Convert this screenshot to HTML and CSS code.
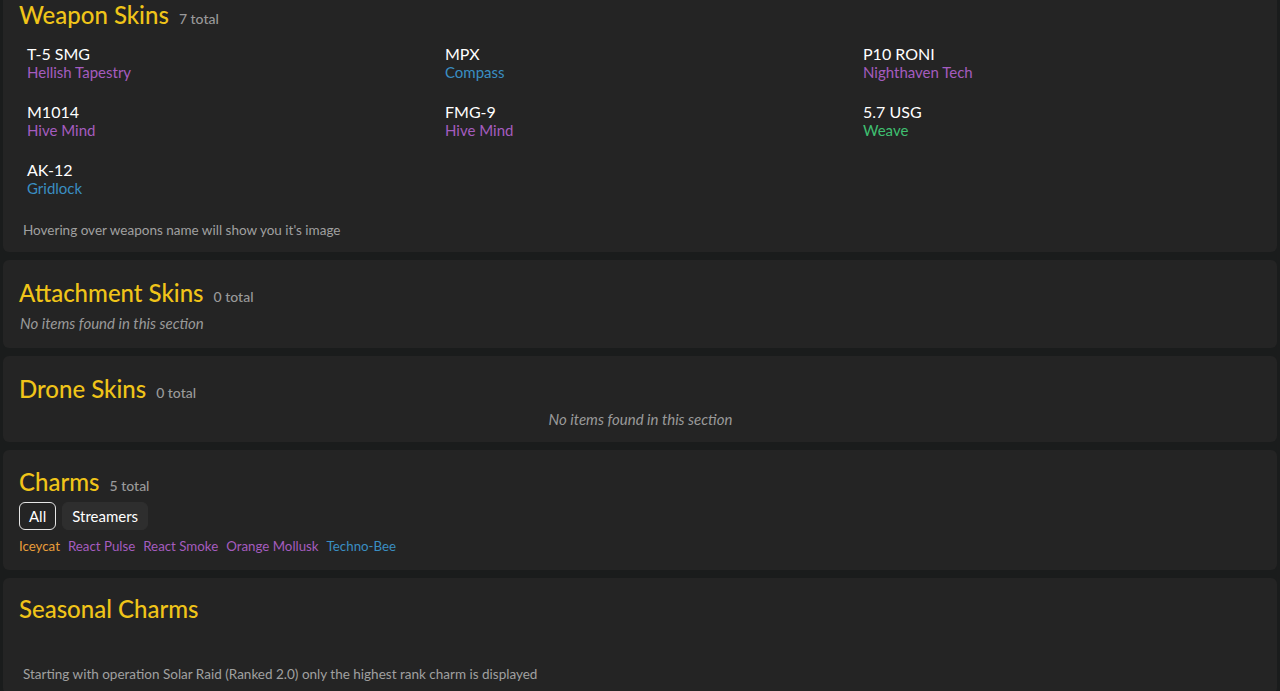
FILE: index.html
```html
<!DOCTYPE html>
<html lang="en">
<head>
    <meta charset="UTF-8">
    <meta name="viewport" content="width=device-width, initial-scale=1.0">
    <title>Inventory</title>
    <link rel="stylesheet" href="styles.css">
</head>
<body>
    <div class="page">
        <!-- Weapon skins -->
        <div class="card card-first">
            <h2 class="title">Weapon Skins <span class="count">7 total</span></h2>
            <div class="item-grid">
                <div class="item">
                    <div class="item-name">T-5 SMG</div>
                    <div class="item-skin purple">Hellish Tapestry</div>
                </div>
                <div class="item">
                    <div class="item-name">MPX</div>
                    <div class="item-skin blue">Compass</div>
                </div>
                <div class="item">
                    <div class="item-name">P10 RONI</div>
                    <div class="item-skin purple">Nighthaven Tech</div>
                </div>
                <div class="item">
                    <div class="item-name">M1014</div>
                    <div class="item-skin purple">Hive Mind</div>
                </div>
                <div class="item">
                    <div class="item-name">FMG-9</div>
                    <div class="item-skin purple">Hive Mind</div>
                </div>
                <div class="item">
                    <div class="item-name">5.7 USG</div>
                    <div class="item-skin green">Weave</div>
                </div>
                <div class="item">
                    <div class="item-name">AK-12</div>
                    <div class="item-skin blue">Gridlock</div>
                </div>
            </div>
            <p class="note note-weapons">Hovering over weapons name will show you it's image</p>
        </div>

        <div class="card">
            <h2 class="title">Attachment Skins <span class="count">0 total</span></h2>
            <p class="empty">No items found in this section</p>
        </div>

        <div class="card card-drones">
            <h2 class="title">Drone Skins <span class="count">0 total</span></h2>
            <p class="empty empty-center">No items found in this section</p>
        </div>

        <div class="card card-charms">
            <h2 class="title">Charms <span class="count">5 total</span></h2>
            <div class="filters">
                <button class="filter active">All</button>
                <button class="filter">Streamers</button>
            </div>
            <div class="charms">
                <span class="orange">Iceycat</span>
                <span class="purple">React Pulse</span>
                <span class="purple">React Smoke</span>
                <span class="purple">Orange Mollusk</span>
                <span class="blue">Techno-Bee</span>
            </div>
        </div>

        <div class="card card-last">
            <h2 class="title">Seasonal Charms</h2>
            <p class="note note-seasonal">Starting with operation Solar Raid (Ranked 2.0) only the highest rank charm is displayed</p>
        </div>
    </div>
</body>
</html>
```

FILE: styles.css
```css
body {
    margin: 0;
    background: #1a1c1c;
    font-family: Lato, "Open Sans", sans-serif;
    color: #eeeeee;
    height: 691px;
    overflow: hidden;
}
.page {
    display: flex;
    flex-direction: column;
    gap: 8px;
    padding: 0 3px;
    margin-top: -6px;
}
.card {
    background: #242424;
    border-radius: 6px;
    padding: 18px 16px 16px 16px;
}
.card-first {
    padding-top: 6px;
    padding-bottom: 14px;
}
.card-drones {
    padding-bottom: 14px;
}
.card-charms {
    padding-top: 17px;
}
.card-last {
    padding-top: 16px;
    padding-bottom: 12px;
}
.title {
    margin: 0;
    font-size: 24px;
    font-weight: 500;
    color: #f0c419;
    line-height: 30px;
}
.count {
    font-size: 14px;
    color: #9a9a9a;
    margin-left: 4px;
}
.item-grid {
    display: grid;
    grid-template-columns: repeat(3, 418px);
    row-gap: 20px;
    margin-top: 10px;
    padding-left: 8px;
}
.item-name {
    font-size: 16px;
    color: #ffffff;
    line-height: 19px;
}
.item-skin {
    font-size: 15px;
    line-height: 19px;
}
.purple { color: #a45cbf; }
.blue { color: #3a8ec2; }
.green { color: #3fbf70; }
.orange { color: #e89d3a; }
.note {
    margin: 0;
    font-size: 13.5px;
    color: #a0a0a0;
    padding-left: 4px;
}
.note-weapons {
    margin-top: 24px;
}
.note-seasonal {
    margin-top: 42px;
}
.empty {
    margin: 2px 0 0 1px;
    font-size: 15px;
    font-style: italic;
    color: #9a9a9a;
}
.empty-center {
    text-align: center;
    margin-top: 2px;
}
.filters {
    display: flex;
    gap: 6px;
    margin-top: 1px;
}
.filter {
    font-family: inherit;
    font-size: 15px;
    color: #ffffff;
    background: #2e2e2e;
    border: 1px solid #2e2e2e;
    border-radius: 6px;
    padding: 4px 9px;
    line-height: 18px;
}
.filter.active {
    background: #242424;
    border-color: #e6e6e6;
}
.charms {
    display: flex;
    gap: 8px;
    margin-top: 8px;
    font-size: 13.3px;
}
```
